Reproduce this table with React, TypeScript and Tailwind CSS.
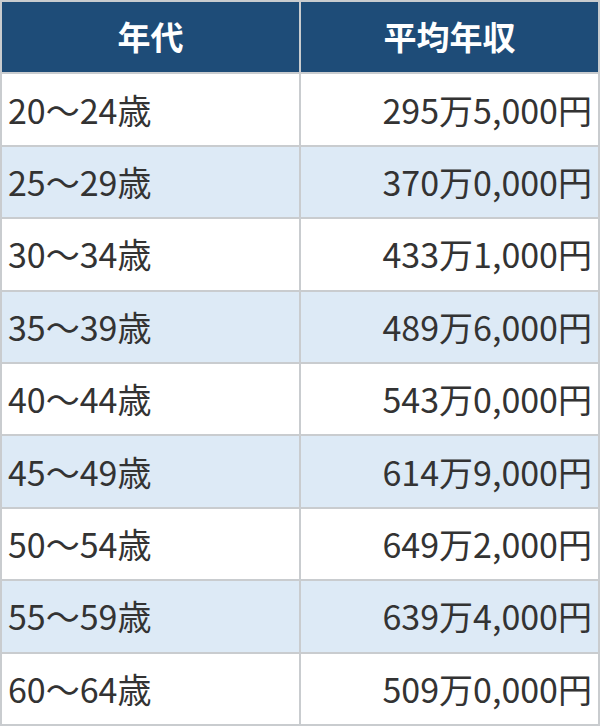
import React from "react";

const rows: [string, string][] = [
  ["20～24歳", "295万5,000円"],
  ["25～29歳", "370万0,000円"],
  ["30～34歳", "433万1,000円"],
  ["35～39歳", "489万6,000円"],
  ["40～44歳", "543万0,000円"],
  ["45～49歳", "614万9,000円"],
  ["50～54歳", "649万2,000円"],
  ["55～59歳", "639万4,000円"],
  ["60～64歳", "509万0,000円"],
];

export default function App() {
  return (
    <div
      className="w-[600px] h-[726px] grid grid-cols-2 grid-rows-10 gap-[2px] p-[2px] bg-[#c9cccf]"
      style={{ fontFamily: '"Noto Sans CJK JP", "Noto Sans", sans-serif' }}
    >
      <div className="bg-[#1e4c78] text-white font-bold text-[33px] flex items-center justify-center">
        年代
      </div>
      <div className="bg-[#1e4c78] text-white font-bold text-[33px] flex items-center justify-center">
        平均年収
      </div>
      {rows.map(([age, income], i) => {
        const bg = i % 2 === 1 ? "bg-[#ddeaf6]" : "bg-white";
        return (
          <React.Fragment key={age}>
            <div className={`${bg} flex items-center pl-[6px] text-[34px] text-[#333333] leading-none`}>
              {age}
            </div>
            <div className={`${bg} flex items-center justify-end pr-[6px] text-[34px] text-[#333333] leading-none`}>
              {income}
            </div>
          </React.Fragment>
        );
      })}
    </div>
  );
}
